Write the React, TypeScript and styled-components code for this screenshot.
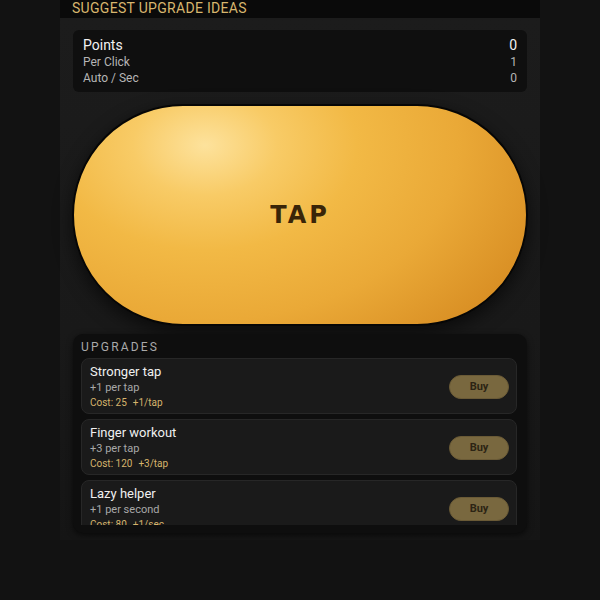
import React from "react";
import styled, { createGlobalStyle } from "styled-components";

const upgrades = [
  { name: "Stronger tap", desc: "+1 per tap", cost: 25, gain: "+1/tap" },
  { name: "Finger workout", desc: "+3 per tap", cost: 120, gain: "+3/tap" },
  { name: "Lazy helper", desc: "+1 per second", cost: 80, gain: "+1/sec" },
];

const stats = [
  { label: "Per Click", value: 1 },
  { label: "Auto / Sec", value: 0 },
];

function App() {
  return (
    <>
      <GlobalStyle />
      <Column>
        <Header>Suggest upgrade ideas</Header>
        <Body>
          <StatsCard>
            <StatRow $main>
              <span>Points</span>
              <span>0</span>
            </StatRow>
            {stats.map((s) => (
              <StatRow key={s.label}>
                <span>{s.label}</span>
                <span>{s.value}</span>
              </StatRow>
            ))}
          </StatsCard>

          <TapButton type="button">TAP</TapButton>

          <UpgradesPanel>
            <PanelLabel>Upgrades</PanelLabel>
            <UpgradeList>
              {upgrades.map((u) => (
                <UpgradeItem key={u.name}>
                  <UpgradeText>
                    <UpgradeName>{u.name}</UpgradeName>
                    <UpgradeDesc>{u.desc}</UpgradeDesc>
                    <UpgradeCost>
                      Cost: {u.cost}
                      <Gain>{u.gain}</Gain>
                    </UpgradeCost>
                  </UpgradeText>
                  <BuyButton type="button">Buy</BuyButton>
                </UpgradeItem>
              ))}
            </UpgradeList>
          </UpgradesPanel>
        </Body>
      </Column>
    </>
  );
}

const GlobalStyle = createGlobalStyle`
  html, body {
    margin: 0;
    padding: 0;
    background: #121212;
    font-family: Roboto, "Liberation Sans", sans-serif;
  }
  * {
    box-sizing: border-box;
  }
`;

const Column = styled.div`
  width: 480px;
  margin: 0 auto;
  display: flex;
  flex-direction: column;
`;

const Header = styled.div`
  height: 18px;
  background: #0a0a0a;
  padding: 0 12px 2px;
  display: flex;
  align-items: flex-end;
  color: #d8b66e;
  font-size: 14px;
  line-height: 16px;
  text-transform: uppercase;
  letter-spacing: 0.3px;
`;

const Body = styled.div`
  background: linear-gradient(180deg, #1c1c1c 0%, #191919 60%, #151515 100%);
  padding: 12px 13px 7px;
  display: flex;
  flex-direction: column;
`;

const StatsCard = styled.div`
  background: #0f0f0f;
  border-radius: 6px;
  padding: 6px 10px 6px 10px;
  display: flex;
  flex-direction: column;
`;

const StatRow = styled.div<{ $main?: boolean }>`
  display: flex;
  justify-content: space-between;
  align-items: center;
  height: ${(p) => (p.$main ? "18px" : "16px")};
  font-size: ${(p) => (p.$main ? "14px" : "12px")};
  color: ${(p) => (p.$main ? "#f2f2f2" : "#b5b5b5")};
`;

const TapButton = styled.button`
  margin: 12px -1px 0;
  height: 222px;
  border-radius: 111px;
  border: 2px solid #060606;
  background: radial-gradient(
    ellipse 80% 115% at 29% 18%,
    #fde29c 0%,
    #f8cb66 20%,
    #f2b945 42%,
    #eaa937 70%,
    #d98f24 100%
  );
  box-shadow: 0 6px 18px rgba(0, 0, 0, 0.6);
  color: #3a2508;
  font-family: "DejaVu Sans", Roboto, sans-serif;
  font-weight: 700;
  font-size: 24px;
  letter-spacing: 3px;
  padding: 0;
  cursor: pointer;
`;

const UpgradesPanel = styled.div`
  margin-top: 8px;
  background: #0e0e0e;
  border-radius: 10px;
  padding: 6px 10px 8px 8px;
  box-shadow: 0 2px 6px rgba(0, 0, 0, 0.6);
  display: flex;
  flex-direction: column;
  gap: 4px;
`;

const PanelLabel = styled.div`
  color: #a9a9a9;
  font-size: 12px;
  line-height: 14px;
  letter-spacing: 2.2px;
  text-transform: uppercase;
`;

const UpgradeList = styled.div`
  height: 167px;
  overflow: hidden;
  display: flex;
  flex-direction: column;
  gap: 5px;
`;

const UpgradeItem = styled.div`
  flex: none;
  height: 56px;
  background: #1a1a1a;
  border: 1px solid #272727;
  border-radius: 8px;
  padding: 5px 7px 4px 8px;
  display: flex;
  align-items: center;
  justify-content: space-between;
`;

const UpgradeText = styled.div`
  display: flex;
  flex-direction: column;
  align-self: flex-start;
`;

const UpgradeName = styled.div`
  color: #f0f0f0;
  font-size: 13px;
  line-height: 16px;
`;

const UpgradeDesc = styled.div`
  color: #a8a8a8;
  font-size: 11px;
  line-height: 15px;
`;

const UpgradeCost = styled.div`
  color: #d6b46c;
  font-size: 10px;
  line-height: 15px;
`;

const Gain = styled.span`
  margin-left: 6px;
`;

const BuyButton = styled.button`
  width: 60px;
  height: 24px;
  border-radius: 12px;
  border: 1px solid #6a5a36;
  background: #79683f;
  color: #2c2414;
  font-family: Roboto, sans-serif;
  font-weight: 700;
  font-size: 11px;
  padding: 0;
  cursor: pointer;
`;

export default App;
